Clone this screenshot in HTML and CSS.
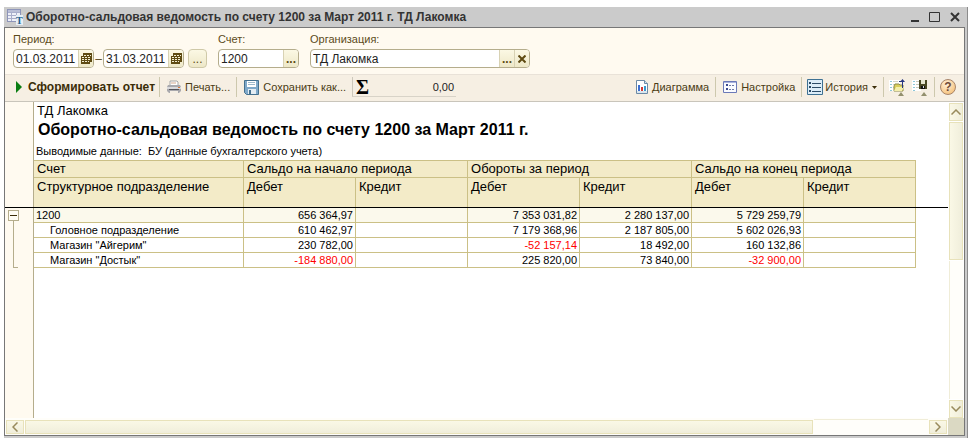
FILE: index.html
```html
<!DOCTYPE html>
<html lang="ru">
<head>
<meta charset="utf-8">
<title>Оборотно-сальдовая ведомость</title>
<link rel="stylesheet" href="styles.css">
</head>
<body>
<div class="window">
  <header class="titlebar">
    <svg class="app-icon" width="16" height="16" viewBox="0 0 16 16" aria-hidden="true">
      <rect x="0.5" y="0.5" width="13" height="12" fill="#eef0f8" stroke="#8d94b8"/>
      <path d="M1 3.500h12M1 6.500h12M1 9.500h12M4.500 1v11M9.500 1v11" stroke="#a9aecb" fill="none"/>
      <rect x="1" y="1" width="12" height="2" fill="#b9bed6"/>
      <rect x="9" y="6" width="7" height="10" fill="#e6eef5"/>
      <text x="9" y="15" class="icon-letter">T</text>
    </svg>
    <h1 class="caption">Оборотно-сальдовая ведомость по счету 1200 за Март 2011 г. ТД Лакомка</h1>
    <button class="win-button" type="button" aria-label="Свернуть"><svg width="12" height="12" viewBox="0 0 12 12"><path d="M2 10h8" stroke="#333" stroke-width="2"/></svg></button>
    <button class="win-button" type="button" aria-label="Развернуть"><svg width="12" height="12" viewBox="0 0 12 12"><path d="M0.500 1.500h10v9h-10z" fill="none" stroke="#333"/></svg></button>
    <button class="win-button" type="button" aria-label="Закрыть"><svg width="12" height="12" viewBox="0 0 12 12"><path d="M2 2l8 8M10 2l-8 8" stroke="#333" stroke-width="2"/></svg></button>
  </header>

  <main class="client">
    <form class="filters">
      <div class="filter">
        <label for="from">Период:</label>
        <div class="line">
          <div class="field short">
            <input id="from" type="text" value="01.03.2011">
            <button type="button" class="calendar" aria-label="Выбрать дату начала"><svg width="11" height="12" viewBox="0 0 11 12"><path d="M2 0h9v9H9v2H0V3h2z" fill="#5e4a12"/><path d="M1 4.500h2M4 4.500h2M7 4.500h2M1 6.500h2M4 6.500h2M7 6.500h2M1 8.500h2M4 8.500h2M7 8.500h1M3 2.500h2M6 2.500h2M9 2.500h1" stroke="#f3efd2" fill="none"/></svg></button>
          </div>
          <span class="dash">–</span>
          <div class="field short">
            <input type="text" value="31.03.2011" aria-label="Конец периода">
            <button type="button" class="calendar" aria-label="Выбрать дату окончания"><svg width="11" height="12" viewBox="0 0 11 12"><path d="M2 0h9v9H9v2H0V3h2z" fill="#5e4a12"/><path d="M1 4.500h2M4 4.500h2M7 4.500h2M1 6.500h2M4 6.500h2M7 6.500h2M1 8.500h2M4 8.500h2M7 8.500h1M3 2.500h2M6 2.500h2M9 2.500h1" stroke="#f3efd2" fill="none"/></svg></button>
          </div>
          <button type="button" class="range">...</button>
        </div>
      </div>
      <div class="filter">
        <label for="account">Счет:</label>
        <div class="field short">
          <input id="account" type="text" value="1200">
          <button type="button" class="pick">...</button>
        </div>
      </div>
      <div class="filter">
        <label for="org">Организация:</label>
        <div class="field long">
          <input id="org" type="text" value="ТД Лакомка">
          <button type="button" class="pick">...</button>
          <button type="button" class="pick" aria-label="Очистить"><svg width="8" height="8" viewBox="0 0 8 8"><path d="M0.500 0.500l7 7M7.500 0.500l-7 7" stroke="#5e4a12" stroke-width="2"/></svg></button>
        </div>
      </div>
    </form>

    <div class="toolbar">
      <button type="button" class="tool run">
        <svg width="8" height="12" viewBox="0 0 8 12"><path d="M1 0l6 6-6 6z" fill="#0a7d12"/></svg>
        Сформировать отчет
      </button>
      <button type="button" class="tool parted">
        <svg width="14" height="14" viewBox="0 0 14 14"><path d="M3 6V1h7l1 1v4z" fill="#fff" stroke="#a8a8a8"/><path d="M1 5h12l1 2v4l-2 2H2L0 11V7z" fill="#a9a9ad"/><path d="M0 7h14v2H0z" fill="#d9d9dc"/><path d="M2 9h10v1H2z" fill="#55555c"/><path d="M3 11h8v2H3z" fill="#f5efe4"/><path d="M4 3h5" stroke="#d4a98e"/><path d="M11 7h2v1h-2z" fill="#d8793d"/></svg>
        Печать...
      </button>
      <button type="button" class="tool parted">
        <svg width="15" height="15" viewBox="0 0 15 15"><path d="M0.500 0.500h14v14h-12l-2-2z" fill="#7fa9ca" stroke="#45718f"/><path d="M3 1h9v6H3z" fill="#fff"/><path d="M4 2.500h7M4 4.500h7" stroke="#9db9cc"/><path d="M4 9h8v5H4z" fill="#e4edf3"/><path d="M5 10h2v4H5z" fill="#45718f"/></svg>
        Сохранить как...
      </button>
      <div class="sum"><span class="sigma">Σ</span><output>0,00</output></div>
      <span class="spacer"></span>
      <button type="button" class="tool">
        <svg width="12" height="14" viewBox="0 0 12 14"><path d="M0.500 0.500h8l3 3v10h-11z" fill="#fff" stroke="#6d8aa5"/><path d="M8.500 0.500v3h3" fill="#cfe0ec" stroke="#6d8aa5"/><path d="M2 5h2v6H2z" fill="#3c6fd1"/><path d="M5 7h2v4H5z" fill="#d43b35"/><path d="M8 6h2v5H8z" fill="#3a9bd0"/><path d="M1 12h10" stroke="#b7cfdf"/></svg>
        Диаграмма
      </button>
      <button type="button" class="tool parted">
        <svg width="14" height="12" viewBox="0 0 14 12"><path d="M0.500 0.500h13v11h-13z" fill="#fafbff" stroke="#6b79b8"/><path d="M1 1h12v1H1z" fill="#a9b3de"/><path d="M3 3h2v2H3zM3 7h2v2H3z" fill="#3d4a8f"/><path d="M6 4.500h2M9 4.500h2M6 8.500h2M9 8.500h2" stroke="#707aa5"/></svg>
        Настройка
      </button>
      <button type="button" class="tool parted tight">
        <svg width="16" height="16" viewBox="0 0 16 16"><path d="M0.500 0.500h15v15h-15z" fill="#dcedf8" stroke="#3e7193"/><path d="M2 3h2v2H2zM2 7h2v2H2zM2 11h2v2H2z" fill="#2b4b66"/><path d="M5 4.500h9M5 8.500h9M5 12.500h9" stroke="#2b4b66"/></svg>
        История
        <svg class="caret" width="5" height="3" viewBox="0 0 5 3"><path d="M0 0h5L2.500 3z" fill="#3b2d08"/></svg>
      </button>
      <button type="button" class="tool parted tight" aria-label="Загрузить настройки">
        <svg width="17" height="17" viewBox="0 0 17 17"><path d="M0 1h11v11H0z" fill="#fff"/><path d="M1 2.500h2M1 5.500h2M1 8.500h2M1 11.500h2" stroke="#8fc8d8"/><path d="M4 2.500h5M4 5.500h3M4 8.500h2" stroke="#d5d5c5"/><path d="M6 5h4l1 1h3v6H5V7z" fill="#d9cf5b" stroke="#8e8a4d"/><path d="M7 8h8l-2 4H5z" fill="#f4efac"/><path d="M10 2h3v1h-3zM13 2h1v7h-1z" fill="#26357f"/><path d="M11 3l2.500-3L16 3z" fill="#26357f"/><path d="M9 17l3-4 3 4z" fill="#93906e"/></svg>
      </button>
      <button type="button" class="tool last-icon" aria-label="Сохранить настройки">
        <svg width="17" height="17" viewBox="0 0 17 17"><path d="M0 1h9v11H0z" fill="#fff"/><path d="M1 2.500h2M1 5.500h2M1 8.500h2M1 11.500h2" stroke="#8fc8d8"/><path d="M4 2.500h3M4 5.500h3M4 8.500h3" stroke="#c9c9b9"/><path d="M7 1h8v9H7z" fill="#4a4924"/><path d="M9 1h4v4H9z" fill="#e6e6d0"/><path d="M9 7h4v3H9z" fill="#111"/><path d="M11 7h1v2h-1z" fill="#ddd"/><path d="M9 17l3-4 3 4z" fill="#93906e"/></svg>
      </button>
      <button type="button" class="tool parted" aria-label="Справка"><span class="help">?</span></button>
    </div>

    <div class="sheet">
      <div class="gutter">
        <button type="button" class="collapse" aria-label="Свернуть группу"></button>
        <div class="bracket"></div>
      </div>
      <div class="report">
        <p class="company">ТД Лакомка</p>
        <h2 class="report-title">Оборотно-сальдовая ведомость по счету 1200 за Март 2011 г.</h2>
        <p class="note">Выводимые данные:&nbsp; БУ (данные бухгалтерского учета)</p>
        <table class="ledger">
          <colgroup><col class="name"><col span="6" class="money"></colgroup>
          <thead>
            <tr><th>Счет</th><th colspan="2">Сальдо на начало периода</th><th colspan="2">Обороты за период</th><th colspan="2">Сальдо на конец периода</th></tr>
            <tr class="sub"><th>Структурное подразделение</th><th>Дебет</th><th>Кредит</th><th>Дебет</th><th>Кредит</th><th>Дебет</th><th>Кредит</th></tr>
          </thead>
          <tbody>
            <tr class="total"><td>1200</td><td>656 364,97</td><td></td><td>7 353 031,82</td><td>2 280 137,00</td><td>5 729 259,79</td><td></td></tr>
            <tr><td class="child">Головное подразделение</td><td>610 462,97</td><td></td><td>7 179 368,96</td><td>2 187 805,00</td><td>5 602 026,93</td><td></td></tr>
            <tr><td class="child">Магазин "Айгерим"</td><td>230 782,00</td><td></td><td class="negative">-52 157,14</td><td>18 492,00</td><td>160 132,86</td><td></td></tr>
            <tr><td class="child">Магазин "Достык"</td><td class="negative">-184 880,00</td><td></td><td>225 820,00</td><td>73 840,00</td><td class="negative">-32 900,00</td><td></td></tr>
          </tbody>
        </table>
      </div>
      <div class="freeze-line"></div>
      <div class="vscroll">
        <button type="button" class="up" aria-label="Вверх"><svg width="10" height="6" viewBox="0 0 10 6"><path d="M0.500 5.500L5 1l4.500 4.500"/></svg></button>
        <div class="thumb"></div>
        <div class="track"></div>
        <button type="button" class="down" aria-label="Вниз"><svg width="10" height="6" viewBox="0 0 10 6"><path d="M0.500 0.500L5 5l4.500-4.500"/></svg></button>
      </div>
    </div>
    <div class="hscroll">
      <button type="button" aria-label="Влево"><svg width="6" height="10" viewBox="0 0 6 10"><path d="M5.500 0.500L1 5l4.500 4.500"/></svg></button>
      <div class="thumb"></div>
      <div class="track"></div>
      <button type="button" aria-label="Вправо"><svg width="6" height="10" viewBox="0 0 6 10"><path d="M0.500 0.500L5 5 0.500 9.500"/></svg></button>
      <div class="corner"></div>
    </div>
  </main>
</div>
</body>
</html>
```
FILE: styles.css
```css
* { box-sizing: border-box; }

body {
  margin: 0;
  min-height: 100vh;
  display: flex;
  padding: 7px 5px 6px 4px;
  background: #fff;
  color: #000;
  font: 12px/14px "Liberation Sans", Arial, sans-serif;
}

button, input { font: inherit; color: inherit; margin: 0; padding: 0; border: 0; background: none; }
button { display: flex; align-items: center; justify-content: center; }
svg { display: block; flex: none; }
h1, h2, p { margin: 0; }

.window {
  flex: 1;
  min-width: 0;
  display: flex;
  flex-direction: column;
  background: #cbcbcb;
  border-right: 1px solid #8c8c8c;
  padding: 0 2px 2px 0;
}

/* Title bar */
.titlebar { display: flex; align-items: center; height: 20px; padding: 0 4px 0 3px; gap: 8px; color: #333; }
.app-icon { margin-right: -5px; }
.icon-letter { font: bold 10px "Liberation Serif", serif; fill: #1f5f8f; }
.caption { flex: 1; font-size: 12px; line-height: 20px; font-weight: bold; white-space: nowrap; overflow: hidden; }

.client { flex: 1; display: flex; flex-direction: column; border: 1px solid #777; background: #fffaf0; }

/* Filters */
.filters { display: flex; gap: 11px; padding: 4px 8px 6px; height: 46px; color: #5c4b1a; }
.filter { display: flex; flex-direction: column; gap: 3px; }
.filter label { font-size: 11px; line-height: 14px; }
.line { display: flex; align-items: center; }
.field { display: flex; height: 19px; border: 1px solid #b5ad8c; border-radius: 4px; background: #fff; overflow: hidden; }
.short { width: 81px; }
.long { width: 220px; }
.field input { flex: 1; min-width: 0; padding-left: 2px; color: #222; outline: 0; }
.field button, .range { width: 15px; background: linear-gradient(#fbf8e4, #eee8c8); color: #5e4a12; font-weight: bold; }
.field button { border-left: 1px solid #d8d2b4; }
.dash { width: 9px; text-align: center; }
.range { width: 19px; height: 19px; margin-left: 4px; border: 1px solid #cfc9a8; border-radius: 4px; font-weight: normal; }

/* Toolbar */
.toolbar { display: flex; align-items: center; height: 28px; padding: 0 8px 2px 10px; background: #f6efe3; border-top: 1px solid #e9e2d8; border-bottom: 1px solid #c9c5bb; color: #4b3c14; white-space: nowrap; }
.tool { gap: 4px; height: 20px; padding: 0 6px 0 7px; font-size: 11px; }
.run { padding: 0 4px 0 0; gap: 5px; font-size: 12px; font-weight: bold; color: #3b2d08; }
.parted { border-left: 1px solid #cdc8ad; }
.tight { padding: 0 6px 0 5px; gap: 2px; }
.tight .caret { margin-left: 2px; }
.last-icon { padding: 0 5px 0 0; }
.sum { display: flex; align-items: center; width: 104px; height: 20px; padding: 0 2px 0 3px; border-left: 1px solid #cdc8bb; border-bottom: 1px solid #d8d3c8; color: #222; }
.sum output { flex: 1; text-align: right; font-size: 11px; }
.sigma { font: bold 20px/20px "Liberation Serif", serif; color: #000; }
.spacer { flex: 1; }
.help { width: 16px; height: 16px; border: 1px solid #a8856a; border-radius: 50%; background: radial-gradient(circle at 40% 30%, #fff0d8, #f3b869); font-size: 12px; font-weight: bold; line-height: 14px; color: #6e4a3a; text-align: center; }
.toolbar .tool:last-child { padding: 0 0 0 5px; }

/* Sheet */
.sheet { flex: 1; display: flex; position: relative; background: #fff; }
.gutter { width: 29px; padding: 108px 0 0 3px; background: #fffaf0; border-right: 1px solid #b5ad8c; }
.collapse { width: 11px; height: 11px; border: 1px solid #b5ad8c; background: linear-gradient(#3b2d08, #3b2d08) center / 7px 1px no-repeat #fffdf4; }
.bracket { width: 5px; height: 47px; margin-left: 5px; border: solid #b5ad8c; border-width: 0 0 1px 1px; }
.report { flex: 1; min-width: 0; overflow: hidden; }
.company { padding: 1px 0 0 3px; font-size: 13px; line-height: 16px; }
.report-title { padding-left: 4px; font-size: 16px; line-height: 22px; white-space: nowrap; }
.note { padding: 2px 0 0 2px; font-size: 11px; line-height: 17px; }

.ledger { table-layout: fixed; width: 883px; margin-left: -1px; border-collapse: collapse; font-size: 11px; line-height: 14px; }
.name { width: 210px; }
.money { width: 112px; }
.ledger th, .ledger td { padding: 0 2px; border: 1px solid #cbc086; white-space: nowrap; }
.ledger th { height: 17px; padding: 0 3px; background: #f3ebc8; font-size: 13px; line-height: 16px; font-weight: normal; text-align: left; vertical-align: top; }
.ledger .sub th { height: 30px; padding-top: 1px; }
.ledger td { height: 15px; text-align: right; }
.ledger td:first-child { text-align: left; }
.ledger td.child { padding-left: 16px; }
.total { background: #fbf9ec; }
.ledger .negative { color: #f00; }
.freeze-line { position: absolute; left: 0; right: 16px; top: 105px; height: 1px; background: #000; }

/* Scroll bars */
.vscroll { width: 16px; display: flex; flex-direction: column; gap: 1px; padding: 1px 1px 0; }
.hscroll { height: 17px; display: flex; gap: 1px; padding: 1px 0 0 1px; background: #fffefa; }
.vscroll svg, .hscroll svg { fill: none; stroke: #988a5c; stroke-width: 1.5; }
.vscroll button, .hscroll button, .thumb { border: 1px solid #e8e2ba; background: linear-gradient(90deg, #faf8e6, #f0eedb); }
.hscroll button, .hscroll .thumb { background: linear-gradient(#faf8e6, #f0eedb); }
.vscroll button { height: 18px; }
.vscroll .thumb { flex: 138; }
.vscroll .track { flex: 140; background: #fffefa; border-left: 1px solid #f0edd8; }
.hscroll button { width: 18px; height: 14px; margin-top: 1px; }
.hscroll .thumb { flex: 789; height: 14px; margin-top: 1px; }
.hscroll .track { flex: 114; border-top: 1px solid #f0edd8; }
.corner { width: 16px; margin-top: -1px; background: #dbd9c3; }
```
